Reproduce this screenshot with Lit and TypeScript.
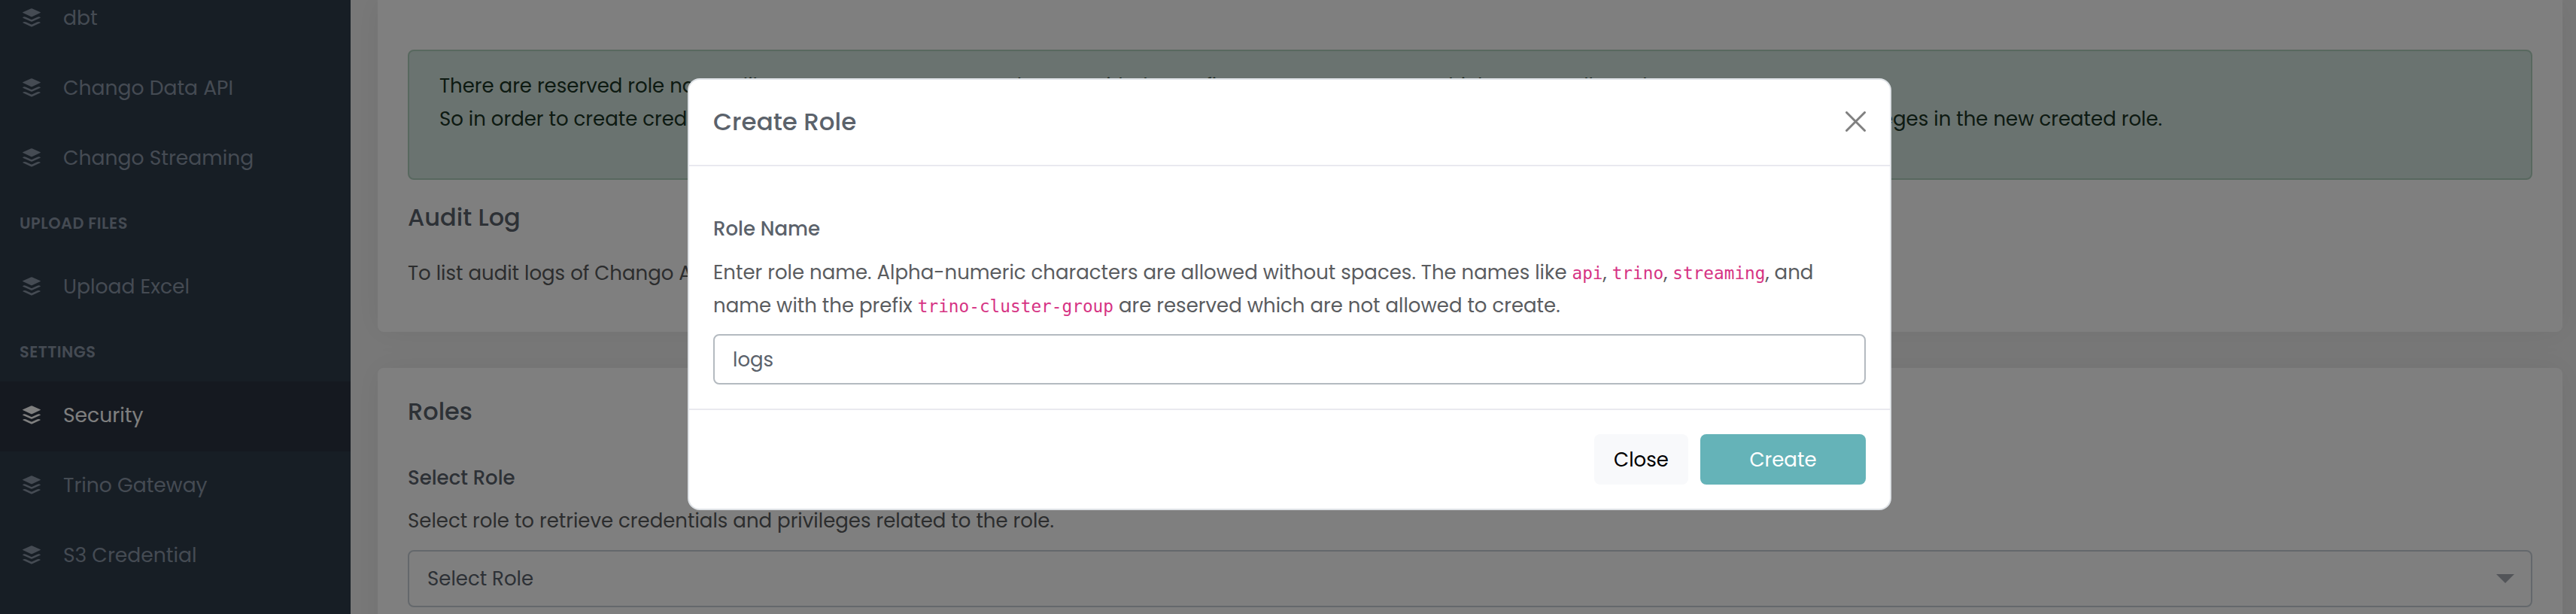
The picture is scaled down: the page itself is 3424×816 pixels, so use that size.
import { LitElement, html, css } from "lit";
import { customElement, property } from "lit/decorators.js";
import { classMap } from "lit/directives/class-map.js";

const sans = css`Poppins, Inter, "Open Sans", sans-serif`;

interface NavItem {
  label: string;
  heading?: boolean;
  active?: boolean;
}

const NAV: NavItem[] = [
  { label: "dbt" },
  { label: "Chango Data API" },
  { label: "Chango Streaming" },
  { label: "UPLOAD FILES", heading: true },
  { label: "Upload Excel" },
  { label: "SETTINGS", heading: true },
  { label: "Security", active: true },
  { label: "Trino Gateway" },
  { label: "S3 Credential" },
];

@customElement("side-nav")
class SideNav extends LitElement {
  static styles = css`
    :host {
      display: block;
      flex: none;
      width: 466px;
      height: 816px;
      overflow: hidden;
      background: #2e3c4b;
      color: #8a96a6;
      font: 400 26.600px/44px ${sans};
    }
    nav {
      display: flex;
      flex-direction: column;
      margin-top: -21px;
    }
    .item {
      display: flex;
      align-items: center;
      gap: 30px;
      height: 93px;
      padding: 0 0 4px 30px;
      box-sizing: border-box;
      flex: none;
      white-space: nowrap;
    }
    .active {
      background: #2a3240;
      color: #fff;
    }
    .heading {
      height: 78px;
      line-height: 78px;
      padding-left: 26px;
      font-size: 20.800px;
      letter-spacing: 0.500px;
      font-weight: 600;
      flex: none;
    }
    svg {
      width: 24px;
      height: 25px;
      fill: currentColor;
    }
  `;
  render() {
    return html`<nav>
      ${NAV.map((n) =>
        n.heading
          ? html`<div class="heading">${n.label}</div>`
          : html`<div class=${classMap({ item: true, active: !!n.active })}>
              <svg viewBox="0 0 72 75">
                <path d="M1 15.500 33 1.200q3-1.300 6 0L71 15.500q2 1.200 0 2.400L39 33q-3 1.400-6 0L1 17.900q-2-1.200 0-2.400Z" />
                <path d="M1 36q5-4 12-1L33 44q3 1.300 6 0l20-9q7-3 12 1 1.500 1.200 0 2L39 52.500q-3 1.400-6 0L1 38q-1.500-.8 0-2Z" />
                <path d="M1 56q5-4 12-1L33 64q3 1.300 6 0l20-9q7-3 12 1 1.500 1.200 0 2L39 72.500q-3 1.400-6 0L1 58q-1.500-.8 0-2Z" />
              </svg>
              <span>${n.label}</span>
            </div>`
      )}
    </nav>`;
  }
}

@customElement("roles-page")
class RolesPage extends LitElement {
  static styles = css`
    :host {
      display: flex;
      flex-direction: column;
      gap: 48px;
      flex: 1;
      min-width: 0;
      padding: 0 18px 0 36px;
      background: #f1f1f1;
      color: #585a5c;
      font: 400 26px/44px ${sans};
      white-space: nowrap;
    }
    .card {
      flex: none;
      box-sizing: border-box;
      background: #fff;
      padding: 0 40px;
      box-shadow: 0 0 40px rgba(0, 0, 0, 0.06);
    }
    .top {
      height: 441px;
      padding-top: 66px;
      border-radius: 0 0 8px 8px;
    }
    .bottom {
      height: 400px;
      padding-top: 38px;
      border-radius: 8px 8px 0 0;
    }
    .alert {
      height: 173px;
      box-sizing: border-box;
      border: 2px solid #b0d0be;
      border-radius: 8px;
      background: #d4e6e1;
      color: #1a3424;
      padding: 24px 0 0 40px;
    }
    .alert .second {
      display: flex;
      justify-content: space-between;
      width: 2290px;
    }
    h2 {
      margin: 0;
      font-size: 32px;
      line-height: 40px;
      font-weight: 500;
      color: #5a626c;
    }
    p {
      margin: 0;
    }
    .audit-title {
      margin-top: 30px;
    }
    .audit-text {
      margin-top: 32px;
    }
    .label {
      margin-top: 46px;
      font-weight: 500;
      color: #5a626c;
    }
    .hint {
      margin-top: 13px;
    }
    .select {
      display: flex;
      align-items: center;
      justify-content: space-between;
      margin-top: 17px;
      height: 76px;
      box-sizing: border-box;
      border: 2px solid #c8d0d8;
      border-radius: 8px;
      padding: 0 22px 0 24px;
      color: #5a626c;
    }
    .caret {
      width: 24px;
      height: 12px;
      fill: #a6abb2;
    }
    code {
      font: 22.750px/26px "DejaVu Sans Mono", monospace;
      color: #d63384;
    }
  `;
  render() {
    return html`
      <section class="card top">
        <div class="alert">
          <div>
            There are reserved role names like <code>api</code>, <code>trino</code>, <code>streaming</code>, and name
            with the prefix <code>trino-cluster-group</code> which are not allowed to create.
          </div>
          <div class="second">
            <span>So in order to create credentials and privileges, you need to create a new role</span>
            <span>and add privileges in the new created role.</span>
          </div>
        </div>
        <h2 class="audit-title">Audit Log</h2>
        <p class="audit-text">To list audit logs of Chango Admin.</p>
      </section>
      <section class="card bottom">
        <h2>Roles</h2>
        <div class="label">Select Role</div>
        <p class="hint">Select role to retrieve credentials and privileges related to the role.</p>
        <div class="select">
          <span>Select Role</span>
          <svg class="caret" viewBox="0 0 24 12"><path d="M0 0h24L12 12Z" /></svg>
        </div>
      </section>
    `;
  }
}

@customElement("create-role-dialog")
class CreateRoleDialog extends LitElement {
  @property() value = "logs";
  static styles = css`
    :host {
      display: flex;
      flex-direction: column;
      box-sizing: border-box;
      width: 1600px;
      height: 574px;
      border: 2px solid #dee2e6;
      border-radius: 16px;
      background: #fff;
      color: #5a5c5f;
      font: 400 26px/44px ${sans};
    }
    header {
      display: flex;
      align-items: center;
      justify-content: space-between;
      height: 115px;
      box-sizing: border-box;
      border-bottom: 2px solid #e9e9ef;
      padding: 0 32px 2px;
    }
    h1 {
      margin: 0;
      font-size: 32.500px;
      font-weight: 500;
      color: #5b626b;
    }
    .x {
      width: 27px;
      height: 27px;
      stroke: #808080;
      stroke-width: 3;
      stroke-linecap: round;
    }
    .body {
      display: flex;
      flex-direction: column;
      height: 322px;
      box-sizing: border-box;
      padding: 61px 32px 32px;
    }
    .label {
      font-weight: 500;
      color: #5b626b;
    }
    p {
      margin: 14px 0 0;
      white-space: nowrap;
    }
    code {
      font: 22.750px/26px "DejaVu Sans Mono", monospace;
      color: #d63384;
    }
    .input {
      margin-top: auto;
      height: 67px;
      box-sizing: border-box;
      border: 2px solid #b4bac0;
      border-radius: 8px;
      padding: 0 24px;
      line-height: 64px;
      color: #5b626b;
    }
    footer {
      display: flex;
      flex: 1;
      align-items: center;
      justify-content: flex-end;
      gap: 16px;
      border-top: 2px solid #e9e9ef;
      padding: 0 32px;
    }
    button {
      height: 67px;
      border: 0;
      border-radius: 8px;
      padding: 0;
      font: 400 26px/66px ${sans};
    }
    .close {
      width: 125px;
      background: #f8f9fb;
      color: #000;
    }
    .create {
      width: 220px;
      background: #65b3b8;
      color: #fff;
    }
  `;
  render() {
    return html`
      <header>
        <h1>Create Role</h1>
        <svg class="x" viewBox="0 0 27 27"><path d="M1.500 1.500l24 24M25.500 1.500l-24 24" /></svg>
      </header>
      <div class="body">
        <div class="label">Role Name</div>
        <p>
          Enter role name. Alpha-numeric characters are allowed without spaces. The names like <code>api</code>,
          <code>trino</code>, <code>streaming</code>, and<br />name with the prefix <code>trino-cluster-group</code> are
          reserved which are not allowed to create.
        </p>
        <div class="input">${this.value}</div>
      </div>
      <footer>
        <button class="close">Close</button>
        <button class="create">Create</button>
      </footer>
    `;
  }
}

@customElement("app-root")
class AppRoot extends LitElement {
  static styles = css`
    :host {
      display: flex;
      position: relative;
      width: 3424px;
      height: 816px;
      overflow: hidden;
    }
    .backdrop {
      position: absolute;
      inset: 0;
      display: flex;
      justify-content: center;
      align-items: flex-start;
      padding: 104px 0 0 4px;
      box-sizing: border-box;
      background: rgba(0, 0, 0, 0.5);
    }
  `;
  render() {
    return html`
      <side-nav></side-nav>
      <roles-page></roles-page>
      <div class="backdrop"><create-role-dialog></create-role-dialog></div>
    `;
  }
}
